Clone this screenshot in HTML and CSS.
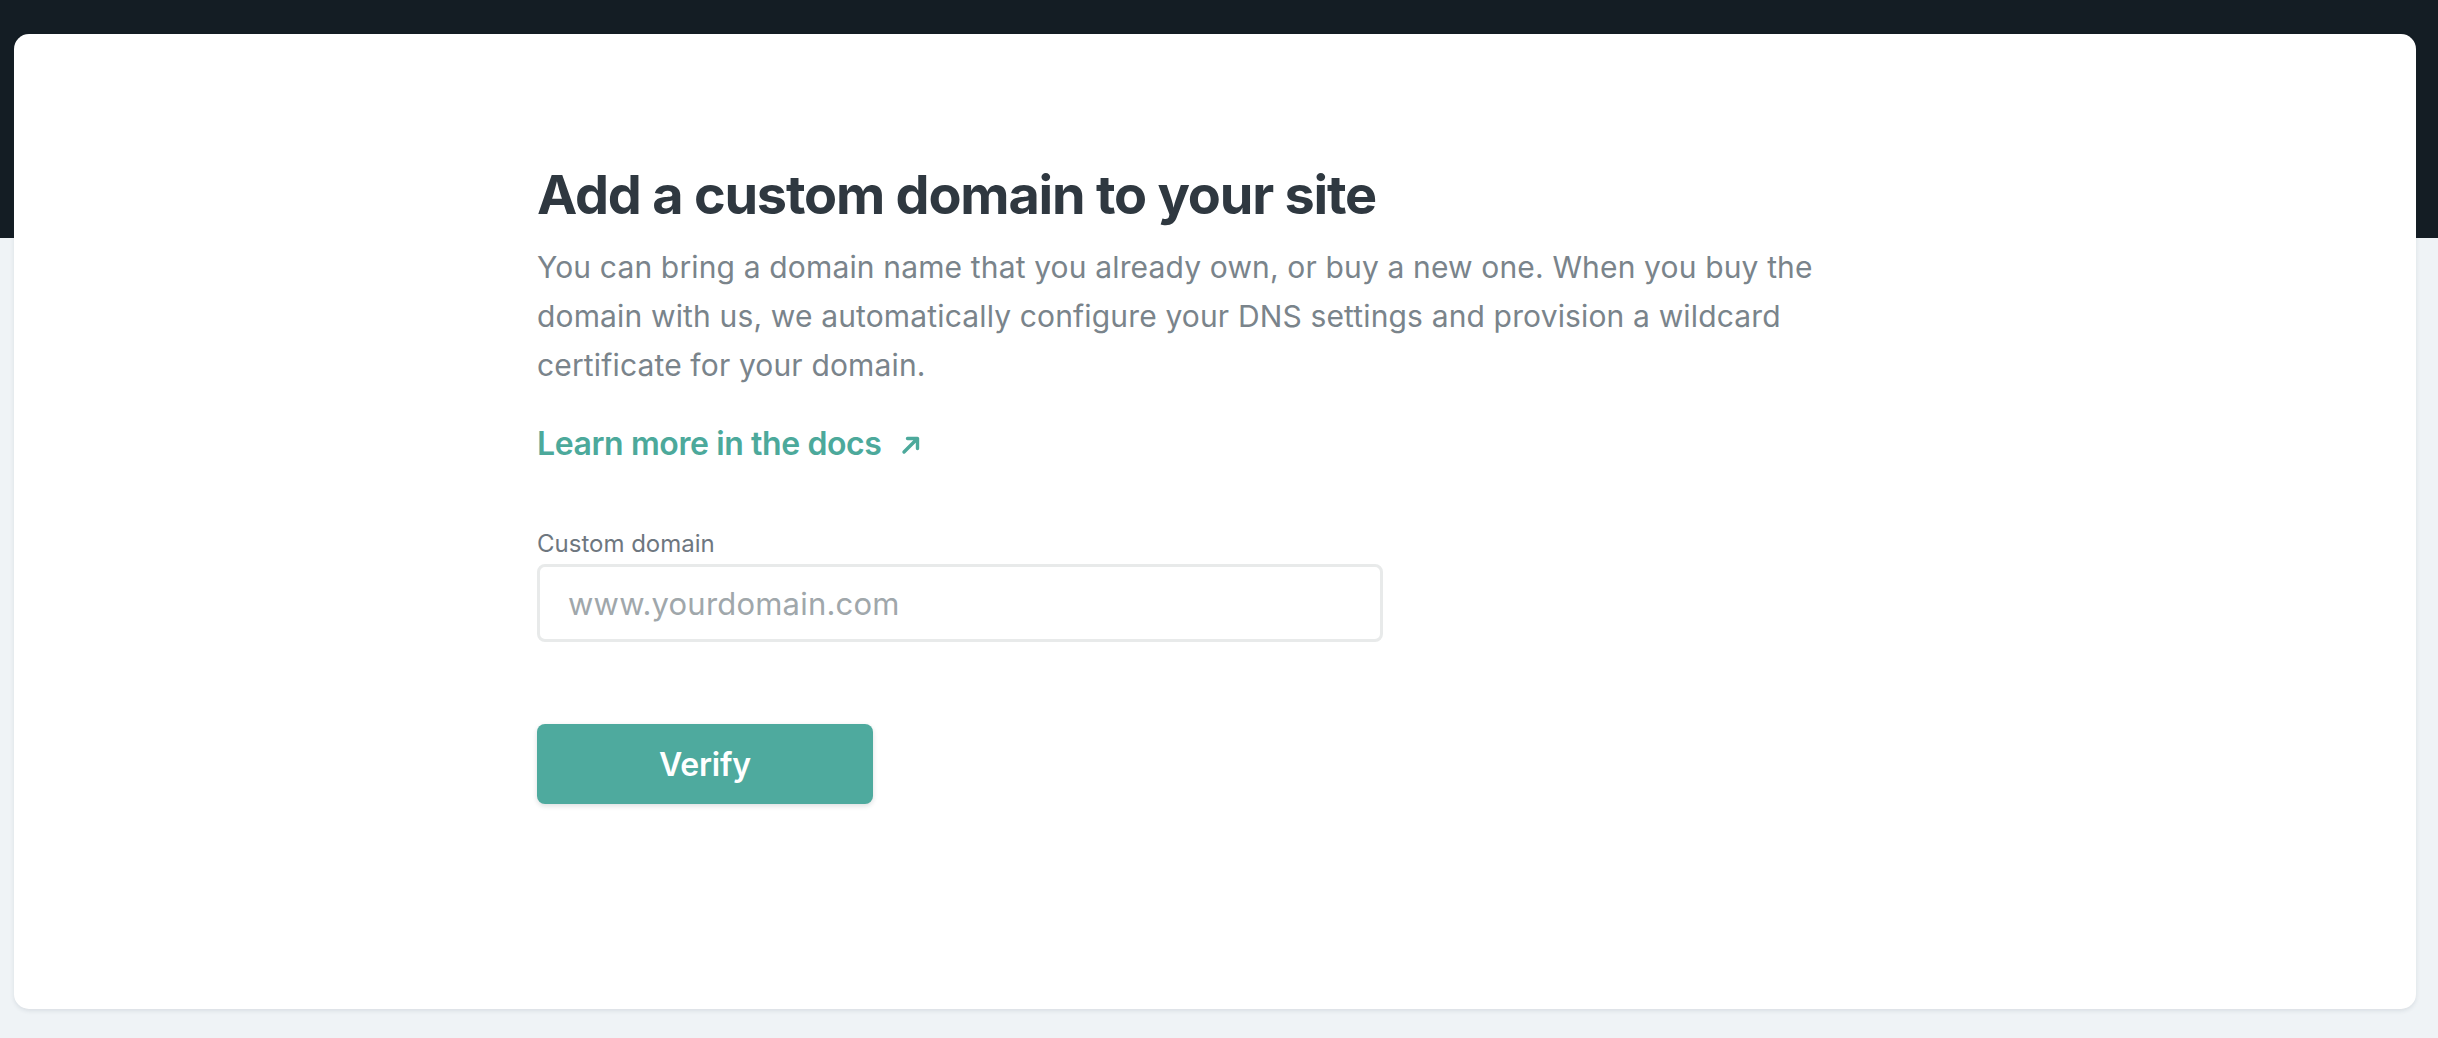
FILE: index.html
```html
<!DOCTYPE html>
<html lang="en">
<head>
<meta charset="utf-8">
<title>Add a custom domain</title>
<link rel="stylesheet" href="styles.css">
</head>
<body>
<div class="page">
  <main class="card">
    <section class="content">
      <h1 class="title">Add a custom domain to your site</h1>
      <p class="lead">You can bring a domain name that you already own, or buy a new one. When you buy the domain with us, we automatically configure your DNS settings and provision a wildcard certificate for your domain.</p>
      <a class="docs-link" href="#">Learn more in the docs
        <svg class="arrow" viewBox="0 0 20 20" width="20" height="20" aria-hidden="true"><path d="M3 17L16.5 3.5M6.5 3.5H16.5V13.5" fill="none" stroke="currentColor" stroke-width="3.4" stroke-linecap="round" stroke-linejoin="round"/></svg>
      </a>
      <form class="form">
        <label class="label" for="domain">Custom domain</label>
        <input class="input" id="domain" type="text" placeholder="www.yourdomain.com">
        <button class="btn" type="button">Verify</button>
      </form>
    </section>
  </main>
</div>
</body>
</html>
```

FILE: styles.css
```css
html, body {
  margin: 0;
  padding: 0;
}
body {
  background: linear-gradient(to bottom, #141d24 0, #141d24 238px, #eff3f6 238px, #eff3f6 100%);
  min-height: 1038px;
  font-family: Inter, "Noto Sans", "Liberation Sans", sans-serif;
}
.page {
  padding: 34px 22px 29px 14px;
}
.card {
  background: #ffffff;
  border-radius: 15px;
  height: 975px;
  box-shadow: 0 2px 4px rgba(30, 50, 70, 0.10);
  box-sizing: border-box;
  padding: 128px 0 0 523px;
}
.content {
  display: flex;
  flex-direction: column;
  align-items: flex-start;
  width: 1340px;
}
.title {
  margin: 0;
  font-size: 54px;
  line-height: 66px;
  font-weight: 700;
  color: #2f3840;
  letter-spacing: -1.2px;
}
.lead {
  margin: 15px 0 0;
  font-size: 30px;
  line-height: 49px;
  color: #7a848b;
  letter-spacing: 0.15px;
  max-width: 1320px;
}
.docs-link {
  margin-top: 34px;
  display: flex;
  align-items: center;
  gap: 20px;
  font-size: 32px;
  line-height: 40px;
  font-weight: 600;
  color: #4ca99b;
  text-decoration: none;
  letter-spacing: -0.4px;
}
.arrow {
  width: 20px;
  height: 20px;
  margin-top: 2px;
}
.form {
  margin-top: 65px;
  display: flex;
  flex-direction: column;
  align-items: flex-start;
}
.label {
  font-size: 24px;
  line-height: 30px;
  color: #6e777f;
  font-weight: 400;
  letter-spacing: 0;
}
.input {
  margin-top: 5px;
  width: 846px;
  height: 78px;
  box-sizing: border-box;
  border: 3px solid #e8eaea;
  border-radius: 8px;
  padding: 0 0 0 28px;
  font-family: inherit;
  font-size: 31px;
  color: #2f3840;
  background: #fff;
  outline: none;
  letter-spacing: 0.2px;
}
.input::placeholder {
  color: #a0a7ab;
}
.btn {
  margin-top: 82px;
  width: 336px;
  height: 80px;
  border: none;
  border-radius: 8px;
  background: #4eaa9e;
  color: #ffffff;
  font-family: inherit;
  font-size: 32px;
  font-weight: 600;
  letter-spacing: -0.2px;
  box-shadow: 0 2px 5px rgba(20, 40, 50, 0.15);
  cursor: pointer;
}
```
